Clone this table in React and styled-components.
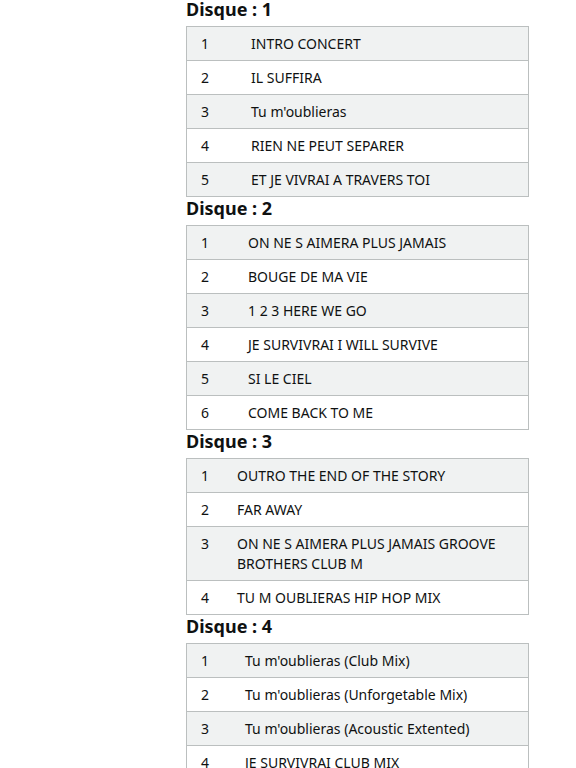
import styled, { createGlobalStyle } from 'styled-components';

const GlobalStyle = createGlobalStyle`
  body {
    margin: 0;
    background: #ffffff;
    font-family: "Noto Sans", "Open Sans", Arial, sans-serif;
    color: #0f1111;
  }
`;

const Page = styled.div`
  padding-left: 186px;
  width: 343px;
`;

const Disc = styled.section`
  & + & {
    margin-top: 2px;
  }
`;

const DiscTitle = styled.h3`
  margin: 0 0 7px;
  font-size: 18px;
  line-height: 19px;
  font-weight: 700;
  color: #0f1111;
`;

const TrackTable = styled.div`
  border: 1px solid #bbbfbf;
  border-top: none;
`;

const Row = styled.div`
  display: grid;
  grid-template-columns: ${(p) => p.$numWidth}px 1fr;
  border-top: 1px solid #bbbfbf;
  background: ${(p) => (p.$striped ? '#f0f2f2' : '#ffffff')};
  font-size: 14px;
  line-height: 20px;
`;

const NumCell = styled.div`
  padding: 6.5px 0 6.5px 14px;
`;

const TitleCell = styled.div`
  padding: 6.5px 14px 6.5px 0;
`;

const discs = [
  {
    numWidth: 64,
    tracks: ['INTRO CONCERT', 'IL SUFFIRA', "Tu m'oublieras", 'RIEN NE PEUT SEPARER', 'ET JE VIVRAI A TRAVERS TOI'],
  },
  {
    numWidth: 61,
    tracks: [
      'ON NE S AIMERA PLUS JAMAIS',
      'BOUGE DE MA VIE',
      '1 2 3 HERE WE GO',
      'JE SURVIVRAI I WILL SURVIVE',
      'SI LE CIEL',
      'COME BACK TO ME',
    ],
  },
  {
    numWidth: 50,
    tracks: [
      'OUTRO THE END OF THE STORY',
      'FAR AWAY',
      'ON NE S AIMERA PLUS JAMAIS GROOVE BROTHERS CLUB M',
      'TU M OUBLIERAS HIP HOP MIX',
    ],
  },
  {
    numWidth: 58,
    tracks: [
      "Tu m'oublieras (Club Mix)",
      "Tu m'oublieras (Unforgetable Mix)",
      "Tu m'oublieras (Acoustic Extented)",
      'JE SURVIVRAI CLUB MIX',
    ],
  },
];

function App() {
  return (
    <>
      <GlobalStyle />
      <Page>
        {discs.map((disc, d) => (
          <Disc key={d}>
            <DiscTitle>Disque : {d + 1}</DiscTitle>
            <TrackTable>
              {disc.tracks.map((title, i) => (
                <Row key={i} $numWidth={disc.numWidth} $striped={i % 2 === 0}>
                  <NumCell>{i + 1}</NumCell>
                  <TitleCell>{title}</TitleCell>
                </Row>
              ))}
            </TrackTable>
          </Disc>
        ))}
      </Page>
    </>
  );
}

export default App;
